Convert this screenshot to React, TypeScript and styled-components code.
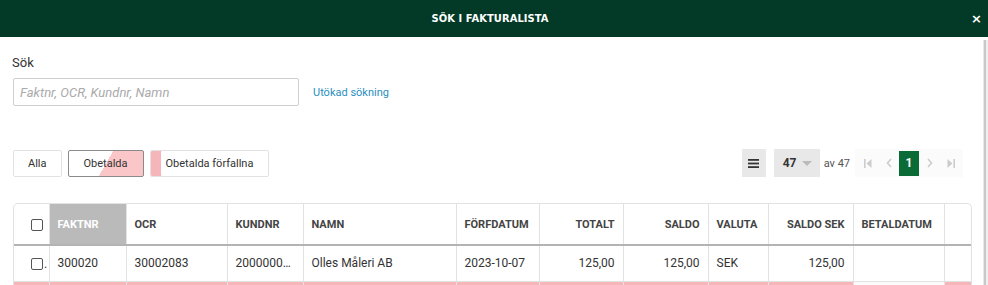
import styled, { createGlobalStyle, css } from "styled-components";

const PINK = "#f6b5b9";

const GlobalStyle = createGlobalStyle`
  html, body {
    margin: 0;
    padding: 0;
    height: 285px;
    overflow: hidden;
    background: #fff;
  }
  body {
    font-family: Roboto, "Liberation Sans", Arial, sans-serif;
    color: #333;
  }
`;

interface Column {
  key: string;
  title: string;
  width: number;
  align?: "left" | "right";
  sorted?: boolean;
}

const COLUMNS: Column[] = [
  { key: "faktnr", title: "Faktnr", width: 77, sorted: true },
  { key: "ocr", title: "OCR", width: 101 },
  { key: "kundnr", title: "Kundnr", width: 76 },
  { key: "namn", title: "Namn", width: 153 },
  { key: "forfdatum", title: "Förfdatum", width: 83 },
  { key: "totalt", title: "Totalt", width: 84, align: "right" },
  { key: "saldo", title: "Saldo", width: 85, align: "right" },
  { key: "valuta", title: "Valuta", width: 60 },
  { key: "saldosek", title: "Saldo SEK", width: 85, align: "right" },
  { key: "betaldatum", title: "Betaldatum", width: 91 },
];

const ROWS: Record<string, string>[] = [
  {
    faktnr: "300020",
    ocr: "30002083",
    kundnr: "2000000123",
    namn: "Olles Måleri AB",
    forfdatum: "2023-10-07",
    totalt: "125,00",
    saldo: "125,00",
    valuta: "SEK",
    saldosek: "125,00",
    betaldatum: "",
  },
  {
    faktnr: "",
    ocr: "",
    kundnr: "",
    namn: "",
    forfdatum: "",
    totalt: "",
    saldo: "",
    valuta: "",
    saldosek: "",
    betaldatum: "",
  },
];

const App = () => {
  return (
    <>
      <GlobalStyle />
      <Modal>
        <Header>
          <span />
          <Title>SÖK I FAKTURALISTA</Title>
          <Close>×</Close>
        </Header>
        <Body>
          <Content>
            <Label>Sök</Label>
            <SearchRow>
              <SearchInput placeholder="Faktnr, OCR, Kundnr, Namn" />
              <ExtendedLink href="#">Utökad sökning</ExtendedLink>
            </SearchRow>

            <Toolbar>
              <Filters>
                <FilterButton>Alla</FilterButton>
                <FilterButton $active $variant="unpaid">
                  Obetalda
                </FilterButton>
                <FilterButton $variant="overdue">Obetalda förfallna</FilterButton>
              </Filters>

              <Paging>
                <MenuButton>
                  <svg width="11" height="9" viewBox="0 0 11 9">
                    <rect x="0" y="0" width="11" height="1.8" fill="#333" />
                    <rect x="0" y="3.6" width="11" height="1.8" fill="#333" />
                    <rect x="0" y="7.2" width="11" height="1.8" fill="#333" />
                  </svg>
                </MenuButton>
                <PageSize>
                  47
                  <svg width="10" height="5" viewBox="0 0 10 5">
                    <path d="M0 0 L10 0 L5 5 Z" fill="#bbb" />
                  </svg>
                </PageSize>
                <OfText>av 47</OfText>
                <Pager>
                  <PagerIcon>
                    <svg width="8" height="9" viewBox="0 0 8 9">
                      <rect x="0" y="0" width="1.6" height="9" fill="#ccc" />
                      <path d="M7.5 0 L2.5 4.5 L7.5 9 Z" fill="#ccc" />
                    </svg>
                  </PagerIcon>
                  <PagerIcon>
                    <svg width="6" height="10" viewBox="0 0 6 10">
                      <path d="M5 1 L1.5 5 L5 9" stroke="#ccc" strokeWidth="1.6" fill="none" />
                    </svg>
                  </PagerIcon>
                  <PageNumber>1</PageNumber>
                  <PagerIcon>
                    <svg width="6" height="10" viewBox="0 0 6 10">
                      <path d="M1 1 L4.5 5 L1 9" stroke="#ccc" strokeWidth="1.6" fill="none" />
                    </svg>
                  </PagerIcon>
                  <PagerIcon>
                    <svg width="8" height="9" viewBox="0 0 8 9">
                      <path d="M0.5 0 L5.5 4.5 L0.5 9 Z" fill="#ccc" />
                      <rect x="6.4" y="0" width="1.6" height="9" fill="#ccc" />
                    </svg>
                  </PagerIcon>
                </Pager>
              </Paging>
            </Toolbar>

            <TableWrap>
              <Table>
                <colgroup>
                  <col style={{ width: 35 }} />
                  {COLUMNS.map((c) => (
                    <col key={c.key} style={{ width: c.width }} />
                  ))}
                  <col />
                </colgroup>
                <thead>
                  <tr>
                    <Th $check>
                      <Checkbox />
                    </Th>
                    {COLUMNS.map((c) => (
                      <Th key={c.key} $align={c.align} $sorted={c.sorted}>
                        {c.title}
                      </Th>
                    ))}
                    <Th />
                  </tr>
                </thead>
                <tbody>
                  {ROWS.map((row, i) => (
                    <Tr key={i} $overdue={i > 0}>
                      <Td $check>
                        {i === 0 && (
                          <>
                            <Checkbox />
                            <Dot>.</Dot>
                          </>
                        )}
                      </Td>
                      {COLUMNS.map((c) => (
                        <Td key={c.key} $align={c.align} $plain={i > 0 && c.key === "betaldatum"}>
                          {row[c.key]}
                        </Td>
                      ))}
                      <Td />
                    </Tr>
                  ))}
                </tbody>
              </Table>
            </TableWrap>
          </Content>
          <Scrollbar />
        </Body>
      </Modal>
    </>
  );
};

const Modal = styled.div`
  display: flex;
  flex-direction: column;
  height: 285px;
`;

const Header = styled.div`
  height: 37px;
  flex: none;
  background: #023a27;
  display: grid;
  grid-template-columns: 1fr auto 1fr;
  align-items: center;
  color: #fff;
`;

const Title = styled.h1`
  margin: 0;
  font-family: "DejaVu Sans Condensed", "DejaVu Sans", sans-serif;
  font-stretch: condensed;
  font-size: 11px;
  font-weight: bold;
  letter-spacing: 0.1px;
  padding-right: 8px;
`;

const Close = styled.span`
  justify-self: end;
  padding-right: 6px;
  font-family: "DejaVu Sans", sans-serif;
  font-size: 13px;
  font-weight: bold;
  line-height: 1;
`;

const Body = styled.div`
  flex: 1;
  display: flex;
  min-height: 0;
`;

const Content = styled.div`
  flex: 1;
  padding: 18px 11px 0 13px;
  overflow: hidden;
`;

const Scrollbar = styled.div`
  width: 4px;
  flex: none;
  border-left: 1px solid #e8e8e8;
  background: linear-gradient(90deg, #c9c9c9 0 2px, #efefef 2px);
  margin-top: 3px;
`;

const Label = styled.div`
  font-size: 13px;
  line-height: 16px;
  color: #333;
  margin-left: -1px;
`;

const SearchRow = styled.div`
  display: flex;
  align-items: center;
  gap: 14px;
  margin-top: 7px;
`;

const SearchInput = styled.input`
  box-sizing: border-box;
  width: 286px;
  height: 28px;
  border: 1px solid #cfcfcf;
  border-radius: 2px;
  padding: 0 6px;
  font-family: Roboto, "Liberation Sans", sans-serif;
  font-size: 13px;
  outline: none;

  &::placeholder {
    color: #aaa;
    font-style: italic;
  }
`;

const ExtendedLink = styled.a`
  font-size: 11px;
  color: #2a8fc1;
  text-decoration: none;
`;

const Toolbar = styled.div`
  display: flex;
  justify-content: space-between;
  align-items: center;
  margin-top: 43px;
  height: 28px;
`;

const Filters = styled.div`
  display: flex;
  gap: 6px;
`;

const FilterButton = styled.button<{ $active?: boolean; $variant?: "unpaid" | "overdue" }>`
  box-sizing: border-box;
  height: 27px;
  padding: 0 14px;
  border: 1px solid #e2e2e2;
  border-radius: 2px;
  background: #fff;
  font-family: Roboto, "Liberation Sans", sans-serif;
  font-size: 11px;
  color: #333;

  ${(p) =>
    p.$active &&
    css`
      border-color: #8a8a8a;
    `}

  ${(p) =>
    p.$variant === "unpaid" &&
    css`
      padding: 0 15px;
      background: linear-gradient(120deg, #fff 50%, #fbc6c8 50%);
    `}

  ${(p) =>
    p.$variant === "overdue" &&
    css`
      padding: 0 15px;
      box-shadow: inset 10px 0 0 ${PINK};
    `}
`;

const Paging = styled.div`
  display: flex;
  align-items: center;
  margin-right: 9px;
`;

const GrayButton = styled.div`
  height: 28px;
  background: #e8e8e8;
  display: flex;
  align-items: center;
  box-sizing: border-box;
`;

const MenuButton = styled(GrayButton)`
  width: 24px;
  justify-content: center;
`;

const PageSize = styled(GrayButton)`
  width: 46px;
  margin-left: 8px;
  padding-left: 9px;
  gap: 6px;
  font-size: 12px;
  font-weight: bold;
  color: #333;
`;

const OfText = styled.span`
  font-size: 11px;
  color: #555;
  margin-left: 4px;
  margin-right: 5px;
`;

const Pager = styled.div`
  display: flex;
  align-items: center;
  height: 28px;
  background: #fbfbfb;
  padding: 0 2px;
`;

const PagerIcon = styled.span`
  width: 21px;
  height: 24px;
  display: flex;
  align-items: center;
  justify-content: center;
`;

const PageNumber = styled.span`
  width: 20px;
  height: 25px;
  background: #0b6b37;
  color: #fff;
  font-size: 12px;
  font-weight: bold;
  display: flex;
  align-items: center;
  justify-content: center;
`;

const TableWrap = styled.div`
  margin-top: 26px;
  border: 1px solid #e2e2e2;
  border-bottom: none;
  border-radius: 5px 5px 0 0;
  overflow: hidden;
`;

const Table = styled.table`
  width: 100%;
  table-layout: fixed;
  border-collapse: collapse;
`;

const cellBase = css<{ $align?: "left" | "right"; $check?: boolean }>`
  box-sizing: border-box;
  text-align: ${(p) => p.$align ?? "left"};
  padding: 0 8px;
  white-space: nowrap;
  overflow: hidden;
  text-overflow: ellipsis;
  border-left: 1px solid #e2e2e2;

  &:first-child {
    border-left: none;
  }

  ${(p) =>
    p.$check &&
    css`
      padding: 0 0 0 17px;
      text-overflow: clip;
    `}
`;

const Th = styled.th<{ $align?: "left" | "right"; $sorted?: boolean; $check?: boolean }>`
  ${cellBase}
  height: 41px;
  font-size: 11px;
  font-weight: bold;
  text-transform: uppercase;
  color: #444;
  border-bottom: 2px solid #b3b3b3;

  ${(p) =>
    p.$sorted &&
    css`
      background: #bababa;
      color: #fff;
    `}
`;

const Tr = styled.tr<{ $overdue?: boolean }>`
  background: ${(p) => (p.$overdue ? PINK : "#fff")};
`;

const Td = styled.td<{ $align?: "left" | "right"; $check?: boolean; $plain?: boolean }>`
  ${cellBase}
  height: 36px;
  font-size: 12px;
  color: #333;
  border-bottom: 1px solid #e2e2e2;

  ${(p) =>
    p.$plain &&
    css`
      background: #fbfbfb;
    `}
`;

const Checkbox = styled.span`
  display: inline-block;
  box-sizing: border-box;
  width: 12px;
  height: 12px;
  border: 1px solid #555;
  border-radius: 2px;
  background: #fff;
  vertical-align: middle;
`;

const Dot = styled.span`
  font-size: 12px;
  margin-left: 1px;
  vertical-align: middle;
`;

export default App;
